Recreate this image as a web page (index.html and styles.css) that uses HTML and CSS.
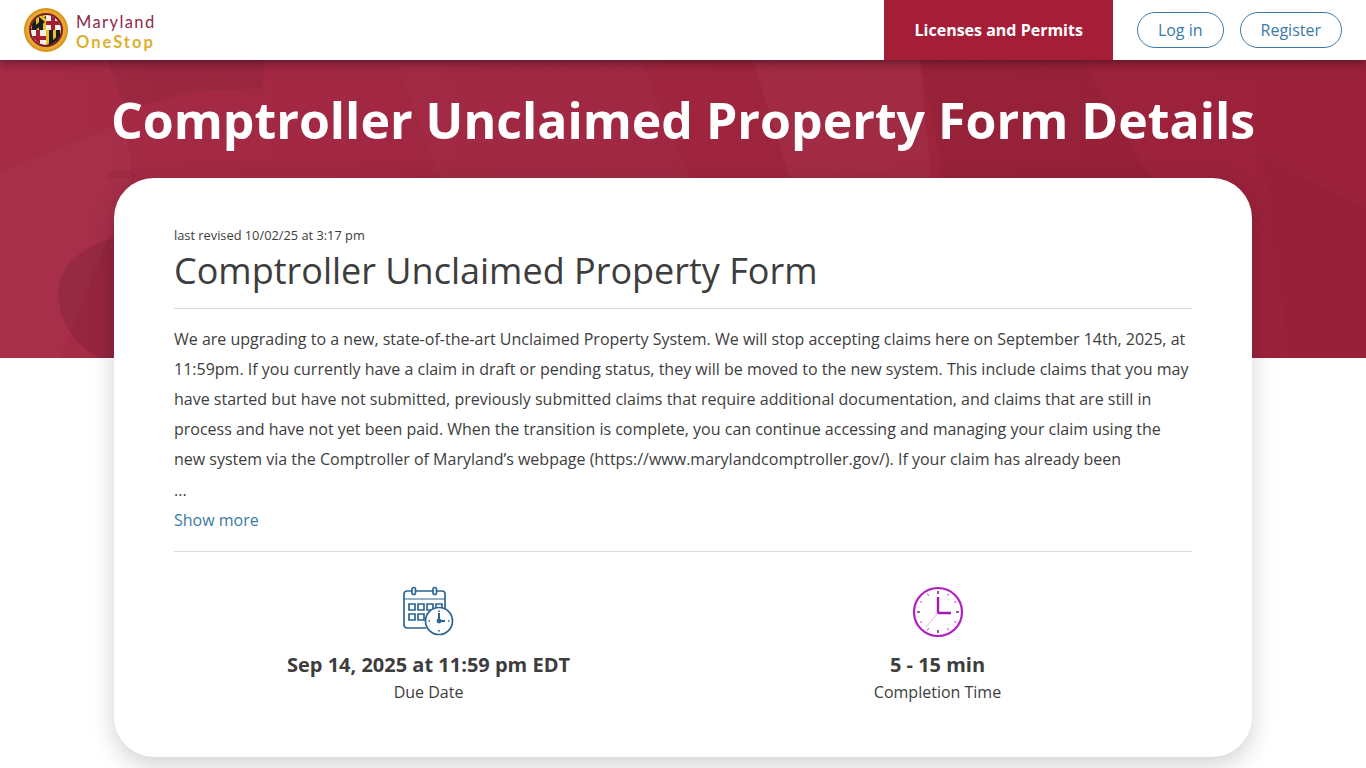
FILE: index.html
```html
<!DOCTYPE html>
<html lang="en">
<head>
  <meta charset="UTF-8">
  <meta name="viewport" content="width=device-width, initial-scale=1.0">
  <title>Comptroller Unclaimed Property Form Details</title>
  <link rel="stylesheet" href="styles.css">
</head>
<body>
  <header class="navbar">
    <a class="brand" href="#">
      <svg class="brand-seal" viewBox="0 0 44 44" width="44" height="44" aria-hidden="true">
        <circle cx="22" cy="22" r="22" fill="#d8931c"/>
        <circle cx="22" cy="22" r="20" fill="#e6a92e"/>
        <circle cx="22" cy="22" r="17" fill="#7c1c2b"/>
        <clipPath id="seal"><circle cx="22" cy="22" r="15"/></clipPath>
        <g clip-path="url(#seal)">
          <rect x="6" y="6" width="16" height="16" fill="#e9c02c"/>
          <path d="M8 6h4v16H8zM15 6h4v16h-4z" fill="#1c1c1c"/>
          <path d="M6 22L22 8v5L12 22z" fill="#1c1c1c"/>
          <path d="M12 6h4l6 5v4z" fill="#e9c02c"/>
          <rect x="22" y="6" width="16" height="16" fill="#f4f0ea"/>
          <path d="M27 6h4v7h7v4h-7v5h-4v-5h-5v-4h5z" fill="#a81e30"/>
          <rect x="6" y="22" width="16" height="16" fill="#f4f0ea"/>
          <path d="M12 22h4v6h6v4h-6v6h-4v-6H6v-4h6z" fill="#a81e30"/>
          <rect x="22" y="22" width="16" height="16" fill="#e9c02c"/>
          <path d="M25 22h4v16h-4zM32 22h4v16h-4z" fill="#1c1c1c"/>
          <path d="M22 38l16-14v5L28 38z" fill="#1c1c1c"/>
        </g>
      </svg>
      <span class="brand-text">
        <span class="brand-top">Maryland</span>
        <span class="brand-bottom">OneStop</span>
      </span>
    </a>
    <nav class="nav-right">
      <a class="nav-active" href="#">Licenses and Permits</a>
      <div class="nav-btns">
        <a class="pill" href="#">Log in</a>
        <a class="pill" href="#">Register</a>
      </div>
    </nav>
  </header>

  <section class="hero">
    <svg class="hero-bg" viewBox="0 0 1366 298" preserveAspectRatio="none" aria-hidden="true">
      <path d="M107 0H265L262 28 190 32 125 50z" fill="#000" opacity=".05"/>
      <path d="M0 112L125 62 132 118 60 298H0z" fill="#fff" opacity=".025"/>
      <path d="M58 232C58 205 85 185 114 178V298H100C75 285 58 262 58 232z" fill="#000" opacity=".1"/>
      <path d="M107 118C112 108 125 105 140 118z" fill="#000" opacity=".06"/>
      <path d="M395 0H640L690 118H440z" fill="#fff" opacity=".015"/>
      <path d="M753 0H920L931 118H790z" fill="#fff" opacity=".035"/>
      <path d="M920 0H1083L1150 118H944z" fill="#000" opacity=".04"/>
      <path d="M1262 95L1366 150V298H1290z" fill="#000" opacity=".025"/>
    </svg>
    <h1 class="hero-title">Comptroller Unclaimed Property Form Details</h1>
  </section>

  <main class="card">
    <p class="revised">last revised 10/02/25 at 3:17 pm</p>
    <h2 class="form-title">Comptroller Unclaimed Property Form</h2>
    <div class="description">
      <p>We are upgrading to a new, state-of-the-art Unclaimed Property System. We will stop accepting claims here on September 14th, 2025, at 11:59pm. If you currently have a claim in draft or pending status, they will be moved to the new system. This include claims that you may have started but have not submitted, previously submitted claims that require additional documentation, and claims that are still in process and have not yet been paid. When the transition is complete, you can continue accessing and managing your claim using the new system via the Comptroller of Maryland’s webpage (https://www.marylandcomptroller.gov/). If your claim has already been</p>
      <p class="ellipsis">...</p>
      <a class="show-more" href="#">Show more</a>
    </div>
    <div class="facts">
      <div class="fact">
        <svg class="fact-icon" viewBox="1 0 52 52" width="52" height="52" fill="none" stroke="#2c6592" stroke-width="1.7" aria-hidden="true">
          <path d="M24 42H5a3 3 0 0 1-3-3V8a3 3 0 0 1 3-3h35a3 3 0 0 1 3 3v15"/>
          <path d="M2 13h41" stroke-width="1.2"/>
          <rect x="10" y="1.500" width="3.500" height="7" rx="1.700" fill="#fff"/>
          <rect x="31" y="1.500" width="3.500" height="7" rx="1.700" fill="#fff"/>
          <path d="M7 18h6v6H7zM16 18h6v6h-6zM25 18h6v6h-6zM34 18h6v6h-6zM7 28h6v6H7zM16 28h6v6h-6z"/>
          <circle cx="37" cy="35" r="13.500" fill="#fff"/>
          <path d="M37 27v8h6" stroke-width="2"/>
          <circle cx="37" cy="35" r="1.600" fill="#2c6592"/>
          <path d="M37 24.500v1.500M37 44v1.500M26.500 35H28M46 35h1.500"/>
        </svg>
        <strong class="fact-value">Sep 14, 2025 at 11:59 pm EDT</strong>
        <span class="fact-label">Due Date</span>
      </div>
      <div class="fact">
        <svg class="fact-icon" viewBox="0 0 52 52" width="52" height="52" fill="none" stroke="#b01fc0" aria-hidden="true">
          <circle cx="26" cy="26" r="24" stroke-width="2.200"/>
          <path d="M26 11v16h13" stroke-width="2.400" stroke="#a01cae"/>
          <path d="M26 27L14 41" stroke="#e3b6e6" stroke-width="1"/>
          <path d="M26 5v3M26 44v3M5 26h3M44 26h3" stroke="#7d2a88" stroke-width="1.600"/>
          <path d="M15.500 7.800l1 1.800M36.500 7.800l-1 1.800M7.800 15.500l1.800 1M44.200 15.500l-1.800 1M7.800 36.500l1.800-1M44.200 36.500l-1.800-1M15.500 44.200l1-1.800M36.500 44.200l-1-1.800" stroke-width="1"/>
        </svg>
        <strong class="fact-value">5 - 15 min</strong>
        <span class="fact-label">Completion Time</span>
      </div>
    </div>
  </main>
</body>
</html>
```

FILE: styles.css
```css
:root {
  --red: #a51e38;
  --text: #3d3d3d;
  --blue: #3a7aa8;
  --line: #d9d9d9;
}

* {
  margin: 0;
  padding: 0;
  box-sizing: border-box;
}

html {
  overflow: hidden;
}

body {
  font-family: "Open Sans", sans-serif;
  color: var(--text);
  background: #fff;
  height: 768px;
  overflow: hidden;
}

a {
  text-decoration: none;
}

.navbar {
  display: flex;
  justify-content: space-between;
  height: 60px;
  padding-left: 24px;
  background: #fff;
  position: relative;
  z-index: 2;
  box-shadow: 0 2px 10px rgba(0, 0, 0, 0.45);
}

.brand {
  display: flex;
  align-items: center;
  gap: 8px;
}

.brand-text {
  display: flex;
  flex-direction: column;
  padding-top: 3px;
  font-family: "Lato", sans-serif;
  font-size: 16.5px;
  line-height: 20px;
}

.brand-top {
  color: #8e2a4a;
  letter-spacing: 1.4px;
}

.brand-bottom {
  color: #dcb02f;
  font-weight: 700;
  letter-spacing: 2px;
}

.nav-right {
  display: flex;
}

.nav-active {
  display: flex;
  align-items: center;
  padding: 0 30px 0 31px;
  background: var(--red);
  color: #fff;
  font-size: 16px;
  font-weight: 700;
}

.nav-btns {
  display: flex;
  align-items: center;
  gap: 16px;
  padding: 0 24px;
}

.pill {
  display: flex;
  align-items: center;
  height: 36px;
  padding: 0 20px;
  border: 1px solid var(--blue);
  border-radius: 18px;
  color: var(--blue);
  font-size: 16px;
}

.hero {
  position: relative;
  height: 298px;
  background: linear-gradient(90deg, #a62b46 0%, #a02641 35%, #9e243d 65%, #9b213a 100%);
  overflow: hidden;
}

.hero-bg {
  position: absolute;
  inset: 0;
  width: 100%;
  height: 100%;
}

.hero-title {
  position: relative;
  padding-top: 25px;
  text-align: center;
  color: #fff;
  font-size: 50px;
  line-height: 70px;
  font-weight: 700;
}

.card {
  position: relative;
  width: 1138px;
  height: 579px;
  margin: -180px auto 0;
  padding: 48px 60px 0;
  background: #fff;
  border-radius: 40px;
  box-shadow: 0 8px 24px rgba(0, 0, 0, 0.18);
}

.revised {
  font-size: 12.8px;
  line-height: 18px;
}

.form-title {
  font-size: 36px;
  line-height: 50px;
  font-weight: 400;
  padding: 2px 0 12px;
  border-bottom: 1px solid var(--line);
}

.description {
  padding: 15px 0 17px;
  font-size: 16px;
  line-height: 30px;
  border-bottom: 1px solid var(--line);
}

.ellipsis {
  line-height: 32px;
}

.show-more {
  display: block;
  line-height: 28px;
  color: var(--blue);
}

.facts {
  display: grid;
  grid-template-columns: 1fr 1fr;
  padding-top: 34px;
}

.fact {
  display: flex;
  flex-direction: column;
  align-items: center;
}

.fact-icon {
  margin-bottom: 13px;
}

.fact-value {
  font-size: 20px;
  line-height: 28px;
}

.fact-label {
  font-size: 16px;
  line-height: 26px;
}
```
